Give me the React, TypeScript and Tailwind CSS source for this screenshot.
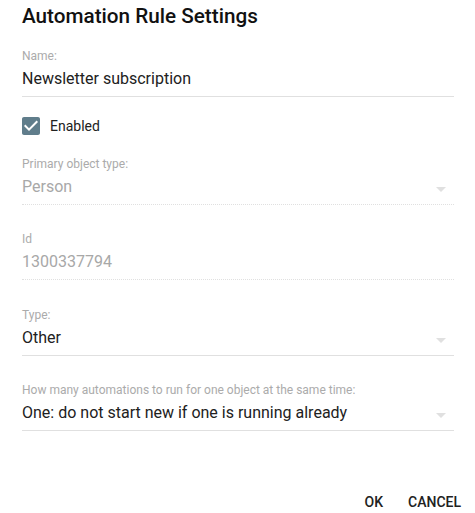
import React from "react";

function Arrow() {
  return (
    <svg width="10" height="5" viewBox="0 0 10 5" className="mt-[12px] mr-[8px] shrink-0">
      <path d="M0 0L5 5L10 0Z" fill="#e0e0e0" />
    </svg>
  );
}

function Field({
  label,
  value,
  disabled,
  select,
  mt,
}: {
  label: string;
  value: string;
  disabled?: boolean;
  select?: boolean;
  mt: string;
}) {
  return (
    <div
      className={`${mt} pb-[5px] border-b border-[#e0e0e0] ${disabled ? "border-dotted" : "border-solid"}`}
    >
      <div className="text-[12px] leading-4 text-[#ababab]">{label}</div>
      <div className="mt-[3px] flex items-start">
        <div
          className={`flex-1 text-[16px] leading-6 ${disabled ? "text-[#a8a8a8]" : "text-[#212121]"}`}
        >
          {value}
        </div>
        {select ? <Arrow /> : null}
      </div>
    </div>
  );
}

export default function App() {
  return (
    <div className="w-[475px] h-[513px] bg-white pl-[22px] pr-[21px] flex flex-col font-['Roboto',sans-serif]">
      <div className="h-8 text-[20.7px] leading-8 font-medium text-[#111]">Automation Rule Settings</div>
      <Field mt="mt-[16px]" label="Name:" value="Newsletter subscription" />
      <div className="mt-[20px] h-[18px] flex items-center">
        <svg width="24" height="24" viewBox="0 0 24 24" className="-m-[3px] shrink-0">
          <path
            fill="#607d8b"
            d="M19 3H5c-1.11 0-2 .9-2 2v14c0 1.1.89 2 2 2h14c1.11 0 2-.9 2-2V5c0-1.1-.89-2-2-2zm-9 14l-5-5 1.41-1.41L10 14.17l7.59-7.59L19 8l-9 9z"
          />
        </svg>
        <span className="ml-[10px] text-[14px] leading-5 text-[#212121]">Enabled</span>
      </div>
      <Field mt="mt-[21px]" label="Primary object type:" value="Person" disabled select />
      <Field mt="mt-[26px]" label="Id" value="1300337794" disabled />
      <Field mt="mt-[27px]" label="Type:" value="Other" select />
      <Field
        mt="mt-[26px]"
        label="How many automations to run for one object at the same time:"
        value="One: do not start new if one is running already"
        select
      />
      <div className="mt-[63px] -mr-[7px] flex justify-end gap-[25px] text-[14px] leading-4 font-medium text-[#212121]">
        <span>OK</span>
        <span>CANCEL</span>
      </div>
    </div>
  );
}
